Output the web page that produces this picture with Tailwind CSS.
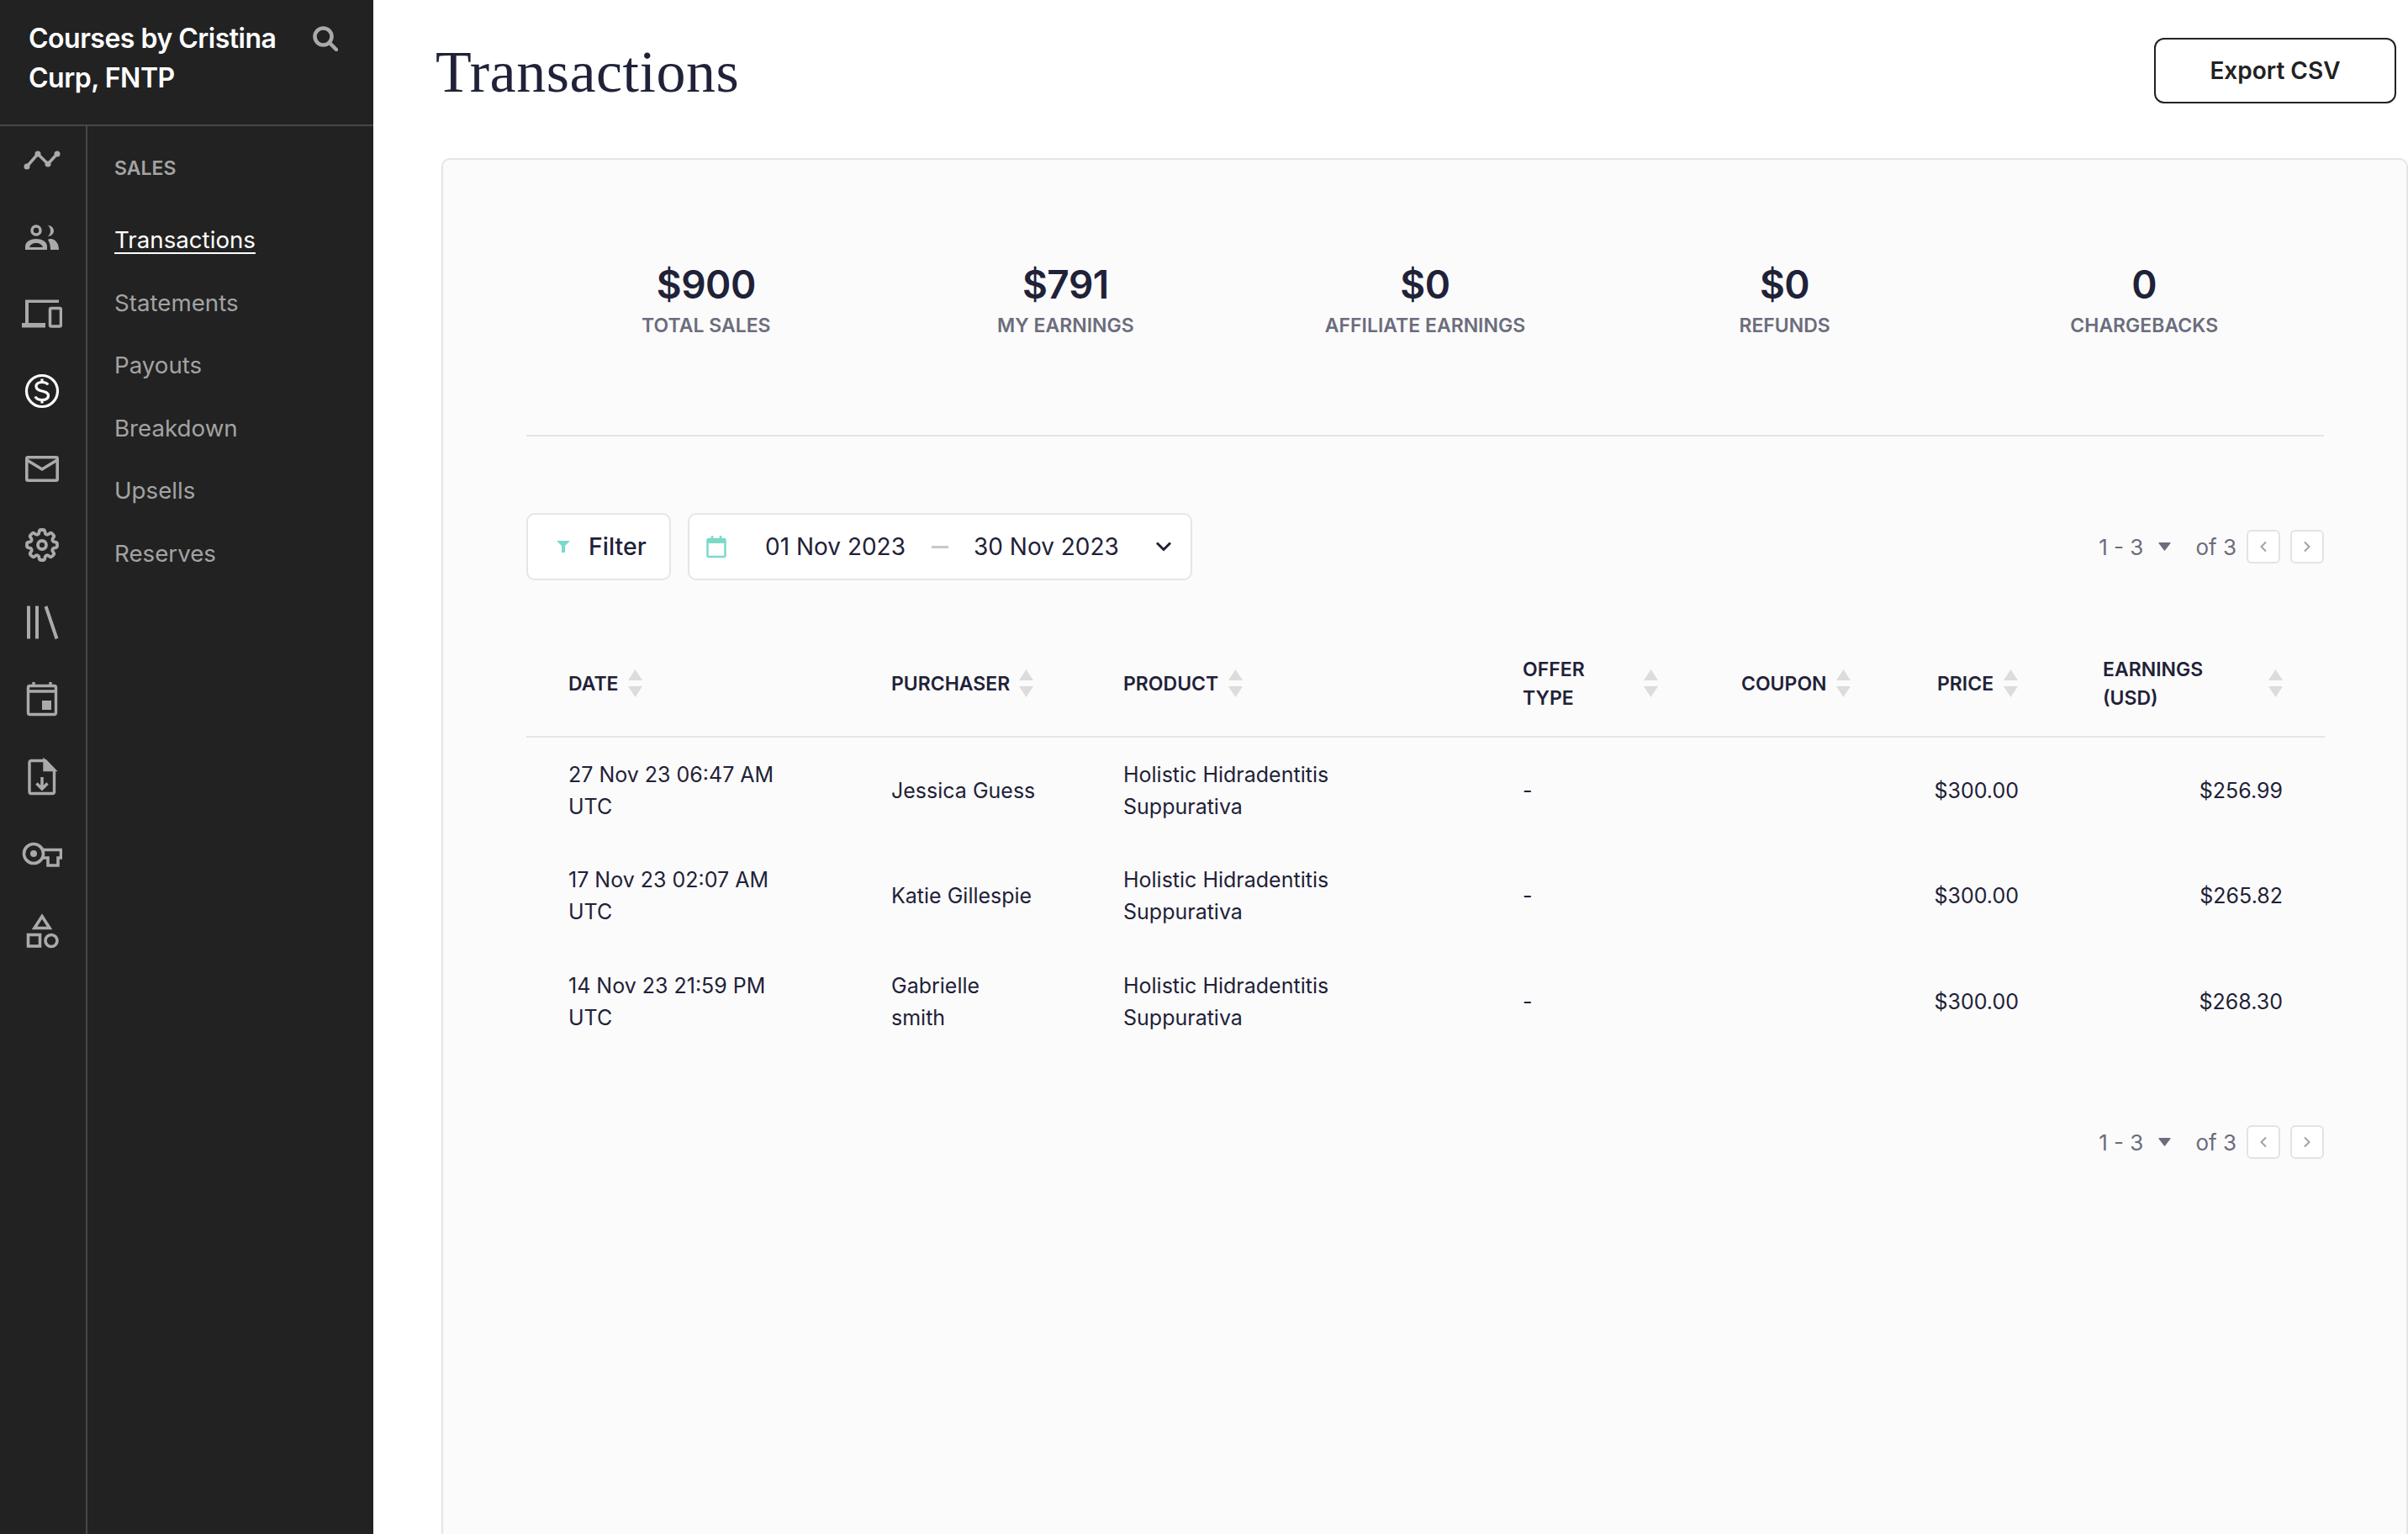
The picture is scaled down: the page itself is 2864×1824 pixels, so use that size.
<!DOCTYPE html>
<html>
<head>
<meta charset="utf-8">
<script src="https://cdn.jsdelivr.net/npm/@tailwindcss/browser@4"></script>
<title>Transactions</title>
</head>
<body class="bg-white font-['Inter',sans-serif] text-[#1f2238] overflow-hidden">
<div class="flex w-[2864px] h-[1824px] overflow-hidden">
  <aside class="w-[444px] shrink-0 h-full bg-[#222222] flex flex-col">
    <div class="h-[150px] shrink-0 border-b-2 border-[#484848] pl-[34px] pr-[42px] pt-[22px] flex justify-between items-start">
      <div class="text-[32px] leading-[47px] font-semibold tracking-[-0.5px] text-white w-[320px]">Courses by Cristina Curp, FNTP</div>
      <svg class="w-[30px] h-[30px] mt-[9px] text-[#aaaaaa]" viewBox="0 0 30 30" fill="none" stroke="currentColor" stroke-width="4.500"><circle cx="12.500" cy="12.500" r="10"/><path d="M20 20l8 8" stroke-linecap="round"/></svg>
    </div>
    <div class="flex flex-1">
      <nav class="w-[104px] shrink-0 border-r-2 border-[#484848] flex flex-col items-center pr-[2px] pt-[16px] gap-[43.7px] text-[#aaaaaa]">
        <svg class="w-12 h-12 shrink-0" viewBox="0 0 48 48" fill="currentColor" stroke="currentColor"><path d="M6 32 19 17 31 29 42 17" fill="none" stroke-width="3.500"/><circle cx="6" cy="32" r="3.500" stroke="none"/><circle cx="19" cy="17" r="3.500" stroke="none"/><circle cx="31" cy="29" r="3.500" stroke="none"/><circle cx="42" cy="17" r="3.500" stroke="none"/></svg>
        <svg class="w-12 h-12 shrink-0" viewBox="0 0 48 48" fill="currentColor"><circle cx="17" cy="16" r="5" fill="none" stroke="currentColor" stroke-width="3.500"/><path fill-rule="evenodd" d="M4 39v-4c0-6 7-9 13-9s13 3 13 9v4zM9 36h16c-1-3-4-5-8-5s-7 2-8 5z"/><path d="M31 10c4 0 7 3 7 6.500s-3 6.500-7 6.500c2-2 3-4 3-6.500s-1-4.500-3-6.500zM35 26c5 1 9 5 9 13h-10c0-5-1-9-3-12 1-.7 2-1 4-1z"/></svg>
        <svg class="w-12 h-12 shrink-0" viewBox="0 0 48 48" fill="currentColor"><path d="M4 7.500h40v3.500H8v24h20v5.500H0v-5.500h4z"/><rect x="33.500" y="17.500" width="13" height="21.500" rx="1.500" fill="none" stroke="currentColor" stroke-width="3.500"/></svg>
        <svg class="w-12 h-12 shrink-0 text-white" viewBox="0 0 48 48" fill="none" stroke="currentColor"><circle cx="24" cy="24" r="18.500" stroke-width="3.200"/><path d="M31 16.500c-1-2-3.500-3-7-3-4.500 0-7 2-7 5s2.500 4.500 7 5.500 7.500 2 7.500 5.500-3 5-7.500 5c-4 0-7-1.500-8-4M24 9.500v4M24 34.500v4" stroke-width="3.200"/></svg>
        <svg class="w-12 h-12 shrink-0" viewBox="0 0 48 48" fill="none" stroke="currentColor" stroke-width="3.600"><rect x="5.800" y="10.800" width="36.400" height="27.400" rx="1.500"/><path d="M6 14l18 11 18-11"/></svg>
        <svg class="w-12 h-12 shrink-0" viewBox="0 0 24 24" fill="none" stroke="currentColor" stroke-width="1.900" stroke-linejoin="round"><path d="M10.343 3.940c.09-.542.560-.940 1.110-.940h1.093c.550 0 1.020.398 1.110.940l.149.894c.070.424.384.764.780.930.398.164.855.142 1.205-.108l.737-.527a1.125 1.125 0 0 1 1.450.120l.773.774c.390.389.440 1.002.120 1.450l-.527.737c-.250.350-.272.806-.107 1.204.165.397.505.710.930.780l.893.150c.543.090.940.559.940 1.109v1.094c0 .550-.397 1.020-.940 1.110l-.894.149c-.424.070-.764.383-.929.780-.165.398-.143.854.107 1.204l.527.738c.320.447.269 1.060-.120 1.450l-.774.773a1.125 1.125 0 0 1-1.449.120l-.738-.527c-.350-.250-.806-.272-1.203-.107-.398.165-.710.505-.781.929l-.149.894c-.090.542-.560.940-1.110.940h-1.094c-.550 0-1.019-.398-1.110-.940l-.148-.894c-.071-.424-.384-.764-.781-.930-.398-.164-.854-.142-1.204.108l-.738.527c-.447.320-1.060.269-1.450-.120l-.773-.774a1.125 1.125 0 0 1-.120-1.450l.527-.737c.250-.350.272-.806.108-1.204-.165-.397-.506-.710-.930-.780l-.894-.150c-.542-.090-.940-.560-.940-1.109v-1.094c0-.550.398-1.020.940-1.110l.894-.149c.424-.070.765-.383.930-.780.165-.398.143-.854-.108-1.204l-.526-.738a1.125 1.125 0 0 1 .120-1.450l.773-.773a1.125 1.125 0 0 1 1.450-.120l.737.527c.350.250.807.272 1.204.107.397-.165.710-.505.780-.929l.150-.894Z"/><circle cx="12" cy="12" r="2.500"/></svg>
        <svg class="w-12 h-12 shrink-0" viewBox="0 0 48 48" fill="none" stroke="currentColor" stroke-width="4"><path d="M8 4.500v39M18 4.500v39M28.500 5l13 38.500"/></svg>
        <svg class="w-12 h-12 shrink-0" viewBox="0 0 48 48" fill="none" stroke="currentColor" stroke-width="3.400"><rect x="7.500" y="7.500" width="33" height="34" rx="2"/><path d="M7.500 14h33M14 3v5M34 3v5"/><rect x="24" y="25" width="11" height="11" fill="currentColor" stroke="none"/></svg>
        <svg class="w-12 h-12 shrink-0" viewBox="0 0 48 48" fill="none" stroke="currentColor" stroke-width="3.400"><path d="M11 4.500h17l10.500 11v26a2 2 0 0 1-2 2h-25.500a2 2 0 0 1-2-2v-35a2 2 0 0 1 2-2z" stroke-linejoin="round"/><path d="M27 4.500v11h11.500z" fill="currentColor"/><path d="M24 24v14M17.500 31.500 24 38l6.500-6.500" stroke-width="3.500"/></svg>
        <svg class="w-12 h-12 shrink-0" viewBox="0 0 48 48" fill="none" stroke="currentColor" stroke-width="3.600"><path d="M25 19.500H46.500V29H43v9H31v-9H25"/><circle cx="14" cy="24" r="11.500"/><circle cx="14" cy="24" r="4" fill="currentColor" stroke="none"/></svg>
        <svg class="w-12 h-12 shrink-0" viewBox="0 0 48 48" fill="none" stroke="currentColor" stroke-width="3.600"><path d="M24 6.500 33 20.500H15z"/><rect x="7.500" y="28.500" width="14" height="13.500"/><circle cx="35" cy="35.500" r="7"/></svg>
      </nav>
      <div class="flex-1 pl-[32px] pt-[34px] text-[#a3a3a3]">
        <div class="text-[23px] leading-[32px] font-semibold mb-[32px]">SALES</div>
        <ul class="text-[27.7px] leading-[74.6px]">
          <li class="text-white"><a class="underline underline-offset-[5px] decoration-2">Transactions</a></li>
          <li>Statements</li>
          <li>Payouts</li>
          <li>Breakdown</li>
          <li>Upsells</li>
          <li>Reserves</li>
        </ul>
      </div>
    </div>
  </aside>
  <main class="flex-1 flex flex-col min-w-0">
    <header class="h-[188px] shrink-0 pl-[74px] pr-[14px] pb-[20px] flex justify-between items-center">
      <h1 class="font-['Liberation_Serif',serif] text-[70px] leading-[80px] font-normal tracking-[0.5px] pt-[4px]">Transactions</h1>
      <button class="w-[288px] h-[78px] border-2 border-[#222222] rounded-[12px] text-[28px] font-semibold text-[#222222]">Export CSV</button>
    </header>
    <section class="ml-[81px] flex-1 bg-[#fbfbfb] border-2 border-b-0 border-[#e5e5e5] rounded-t-[10px] pl-[99px] pr-[98px] pt-[116px]">
      <div class="grid grid-cols-5 text-center border-b-2 border-[#e5e5e7] h-[213px]">
        <div><div class="text-[46px] leading-[64px] font-semibold tracking-[-0.5px]">$900</div><div class="text-[23px] leading-[34px] font-semibold text-[#6b6d7d]">TOTAL SALES</div></div>
        <div><div class="text-[46px] leading-[64px] font-semibold tracking-[-0.5px]">$791</div><div class="text-[23px] leading-[34px] font-semibold text-[#6b6d7d]">MY EARNINGS</div></div>
        <div><div class="text-[46px] leading-[64px] font-semibold tracking-[-0.5px]">$0</div><div class="text-[23px] leading-[34px] font-semibold text-[#6b6d7d]">AFFILIATE EARNINGS</div></div>
        <div><div class="text-[46px] leading-[64px] font-semibold tracking-[-0.5px]">$0</div><div class="text-[23px] leading-[34px] font-semibold text-[#6b6d7d]">REFUNDS</div></div>
        <div><div class="text-[46px] leading-[64px] font-semibold tracking-[-0.5px]">0</div><div class="text-[23px] leading-[34px] font-semibold text-[#6b6d7d]">CHARGEBACKS</div></div>
      </div>
      <div class="flex justify-between items-center mt-[91px] h-[80px]">
        <div class="flex gap-[20px]">
          <button class="w-[172px] h-[80px] bg-white border-2 border-[#e5e5ea] rounded-[10px] flex items-center pl-[33px] gap-[21px] text-[28.5px] font-medium">
            <svg class="w-[18px] h-[16px] text-[#7cd9c9]" viewBox="0 0 18 16" fill="currentColor"><path d="M1 1h16l-6 6v8l-4 0V7z"/></svg>Filter
          </button>
          <div class="w-[600px] h-[80px] bg-white border-2 border-[#e5e5ea] rounded-[10px] flex items-center pl-[20px] text-[28px] whitespace-nowrap">
            <svg class="w-[24px] h-[28px] text-[#7cd9c9] shrink-0" viewBox="0 0 24 28" fill="none" stroke="currentColor" stroke-width="2.500"><rect x="1.500" y="5" width="21" height="21" rx="1.500"/><path d="M1.500 7.500h21" stroke-width="5"/><path d="M7 1v4M17 1v4"/></svg>
            <span class="ml-[46px] w-[168px]">01 Nov 2023</span>
            <span class="w-[20px] h-[3px] bg-[#c8c8cc] ml-[30px] mr-[30px] shrink-0"></span>
            <span class="w-[170px]">30 Nov 2023</span>
            <svg class="w-[20px] h-[12px] ml-[46px] shrink-0" viewBox="0 0 20 12" fill="none" stroke="currentColor" stroke-width="3"><path d="M2 1.500l8 8 8-8"/></svg>
          </div>
        </div>
        <div class="flex items-center text-[26px] text-[#6b6d7d]">
          <span>1 - 3</span>
          <svg class="w-[15px] h-[10px] ml-[18px] mr-[29px]" viewBox="0 0 15 10" fill="currentColor"><path d="M1 0h13q1 0 .5 1L8 9.500q-.5.500-1 0L.5 1Q0 0 1 0z"/></svg>
          <span>of 3</span>
          <button class="w-[40px] h-[40px] ml-[12px] bg-white border-2 border-[#e3e3e6] rounded-[6px] flex items-center justify-center text-[#a0a1ad]"><svg class="w-[10px] h-[14px]" viewBox="0 0 10 14" fill="none" stroke="currentColor" stroke-width="2"><path d="M8 1.500 2.500 7 8 12.500"/></svg></button>
          <button class="w-[40px] h-[40px] ml-[12px] bg-white border-2 border-[#e3e3e6] rounded-[6px] flex items-center justify-center text-[#a0a1ad]"><svg class="w-[10px] h-[14px]" viewBox="0 0 10 14" fill="none" stroke="currentColor" stroke-width="2"><path d="M2 1.500 7.500 7 2 12.500"/></svg></button>
        </div>
      </div>
      <table class="table-fixed w-full mt-[60px] border-collapse text-[25px] leading-[38px]">
        <colgroup><col class="w-[434px]"><col class="w-[276px]"><col class="w-[475px]"><col class="w-[260px]"><col class="w-[233px]"><col class="w-[197px]"><col class="w-[264px]"></colgroup>
        <thead>
          <tr class="h-[126px] border-b-2 border-[#e5e5ea] text-[23px] leading-[34px] font-semibold text-left">
            <th class="pl-[50px] font-semibold"><span class="flex items-center gap-[11px]">DATE<svg class="w-[17px] h-[33px] text-[#dcdcdc]" viewBox="0 0 17 33" fill="currentColor"><path d="M8.500 0 17 13H0zM0 20h17L8.500 33z"/></svg></span></th>
            <th class="font-semibold"><span class="flex items-center gap-[11px]">PURCHASER<svg class="w-[17px] h-[33px] text-[#dcdcdc]" viewBox="0 0 17 33" fill="currentColor"><path d="M8.500 0 17 13H0zM0 20h17L8.500 33z"/></svg></span></th>
            <th class="font-semibold"><span class="flex items-center gap-[12px]">PRODUCT<svg class="w-[17px] h-[33px] text-[#dcdcdc]" viewBox="0 0 17 33" fill="currentColor"><path d="M8.500 0 17 13H0zM0 20h17L8.500 33z"/></svg></span></th>
            <th class="font-semibold"><span class="flex items-center justify-between w-[161px]"><span>OFFER<br>TYPE</span><svg class="w-[17px] h-[33px] text-[#dcdcdc]" viewBox="0 0 17 33" fill="currentColor"><path d="M8.500 0 17 13H0zM0 20h17L8.500 33z"/></svg></span></th>
            <th class="font-semibold"><span class="flex items-center gap-[11px]">COUPON<svg class="w-[17px] h-[33px] text-[#dcdcdc]" viewBox="0 0 17 33" fill="currentColor"><path d="M8.500 0 17 13H0zM0 20h17L8.500 33z"/></svg></span></th>
            <th class="font-semibold"><span class="flex items-center gap-[12px]">PRICE<svg class="w-[17px] h-[33px] text-[#dcdcdc]" viewBox="0 0 17 33" fill="currentColor"><path d="M8.500 0 17 13H0zM0 20h17L8.500 33z"/></svg></span></th>
            <th class="pr-[50px] font-semibold"><span class="flex items-center justify-between"><span>EARNINGS<br>(USD)</span><svg class="w-[17px] h-[33px] text-[#dcdcdc]" viewBox="0 0 17 33" fill="currentColor"><path d="M8.500 0 17 13H0zM0 20h17L8.500 33z"/></svg></span></th>
          </tr>
        </thead>
        <tbody>
          <tr class="h-[126px]"><td class="pl-[50px] pr-[120px]">27 Nov 23 06:47 AM UTC</td><td class="pr-[60px]">Jessica Guess</td><td class="pr-[120px]">Holistic Hidradentitis Suppurativa</td><td>-</td><td></td><td class="pr-[100px]"><div class="flex justify-end -ml-[20px]">$300.00</div></td><td class="text-right pr-[50px]">$256.99</td></tr>
          <tr class="h-[126px]"><td class="pl-[50px] pr-[120px]">17 Nov 23 02:07 AM UTC</td><td class="pr-[60px]">Katie Gillespie</td><td class="pr-[120px]">Holistic Hidradentitis Suppurativa</td><td>-</td><td></td><td class="pr-[100px]"><div class="flex justify-end -ml-[20px]">$300.00</div></td><td class="text-right pr-[50px]">$265.82</td></tr>
          <tr class="h-[126px]"><td class="pl-[50px] pr-[120px]">14 Nov 23 21:59 PM UTC</td><td class="pr-[60px]">Gabrielle<br>smith</td><td class="pr-[120px]">Holistic Hidradentitis Suppurativa</td><td>-</td><td></td><td class="pr-[100px]"><div class="flex justify-end -ml-[20px]">$300.00</div></td><td class="text-right pr-[50px]">$268.30</td></tr>
        </tbody>
      </table>
      <div class="flex justify-end items-center mt-[84px] h-[40px] text-[26px] text-[#6b6d7d]">
        <span>1 - 3</span>
        <svg class="w-[15px] h-[10px] ml-[18px] mr-[29px]" viewBox="0 0 15 10" fill="currentColor"><path d="M1 0h13q1 0 .5 1L8 9.500q-.5.500-1 0L.5 1Q0 0 1 0z"/></svg>
        <span>of 3</span>
        <button class="w-[40px] h-[40px] ml-[12px] bg-white border-2 border-[#e3e3e6] rounded-[6px] flex items-center justify-center text-[#a0a1ad]"><svg class="w-[10px] h-[14px]" viewBox="0 0 10 14" fill="none" stroke="currentColor" stroke-width="2"><path d="M8 1.500 2.500 7 8 12.500"/></svg></button>
        <button class="w-[40px] h-[40px] ml-[12px] bg-white border-2 border-[#e3e3e6] rounded-[6px] flex items-center justify-center text-[#a0a1ad]"><svg class="w-[10px] h-[14px]" viewBox="0 0 10 14" fill="none" stroke="currentColor" stroke-width="2"><path d="M2 1.500 7.500 7 2 12.500"/></svg></button>
      </div>
    </section>
  </main>
</div>
</body>
</html>
